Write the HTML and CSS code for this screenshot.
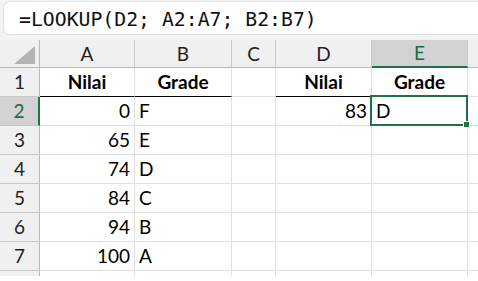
FILE: index.html
```html
<!DOCTYPE html>
<html>
<head>
<meta charset="utf-8">
<link rel="stylesheet" href="styles.css">
</head>
<body>
<div class="formula-area">
  <div class="fbox"><span class="ftext">=LOOKUP(D2; A2:A7; B2:B7)</span></div>
</div>
<div class="sheet">
  <div class="corner"><svg class="tri" width="22" height="18" viewBox="0 0 22 18"><polygon points="0,18 21,18 21,0" fill="#b4b4b4"/></svg></div>
  <div class="ch">A</div><div class="ch">B</div><div class="ch">C</div><div class="ch">D</div><div class="ch sel">E</div><div class="ch last"></div>

  <div class="rh">1</div>
  <div class="c b ctr under">Nilai</div><div class="c b ctr under">Grade</div><div class="c"></div><div class="c b ctr under">Nilai</div><div class="c b ctr under">Grade</div><div class="c last"></div>

  <div class="rh sel">2</div>
  <div class="c r">0</div><div class="c">F</div><div class="c"></div><div class="c r">83</div><div class="c active">D<span class="handle"></span></div><div class="c last"></div>

  <div class="rh">3</div>
  <div class="c r">65</div><div class="c">E</div><div class="c"></div><div class="c"></div><div class="c"></div><div class="c last"></div>

  <div class="rh">4</div>
  <div class="c r">74</div><div class="c">D</div><div class="c"></div><div class="c"></div><div class="c"></div><div class="c last"></div>

  <div class="rh">5</div>
  <div class="c r">84</div><div class="c">C</div><div class="c"></div><div class="c"></div><div class="c"></div><div class="c last"></div>

  <div class="rh">6</div>
  <div class="c r">94</div><div class="c">B</div><div class="c"></div><div class="c"></div><div class="c"></div><div class="c last"></div>

  <div class="rh">7</div>
  <div class="c r">100</div><div class="c">A</div><div class="c"></div><div class="c"></div><div class="c"></div><div class="c last"></div>

  <div class="rh stub"></div>
  <div class="c stub"></div><div class="c stub"></div><div class="c stub"></div><div class="c stub"></div><div class="c stub"></div><div class="c stub last"></div>
</div>
</body>
</html>
```
FILE: styles.css
```css
html, body {
  margin: 0;
  padding: 0;
  background: #ffffff;
}
body {
  width: 478px;
  height: 281px;
  overflow: hidden;
  font-family: Lato, "Open Sans", sans-serif;
  color: #000;
}
.formula-area {
  height: 40px;
  box-sizing: border-box;
  padding: 1px 0 5px 3px;
  background: #f3f3f3;
}
.fbox {
  height: 34px;
  box-sizing: border-box;
  background: #ffffff;
  border: 1px solid #e3e3e3;
  border-right: none;
  border-radius: 7px 0 0 7px;
  display: flex;
  align-items: center;
  padding-left: 15px;
}
.ftext {
  font-family: "DejaVu Sans Mono", monospace;
  font-size: 19.8px;
  letter-spacing: 0;
  white-space: pre;
  color: #111;
  position: relative;
  top: 1px;
}
.sheet {
  display: grid;
  grid-template-columns: 40px 95px 97px 44px 96px 96px 10px;
  grid-template-rows: 28px repeat(7, 29px) 5px;
  font-size: 19px;
}
.corner {
  background: #f0f0f0;
  border-right: 1px solid #b9b9b9;
  border-bottom: 1px solid #b9b9b9;
  display: flex;
  align-items: flex-end;
  justify-content: flex-end;
  padding: 0 3px 3px 0;
}
.ch {
  background: #f0f0f0;
  border-right: 1px solid #c8c8c8;
  border-bottom: 1px solid #b9b9b9;
  text-align: center;
  line-height: 27px;
  color: #222;
}
.ch.sel {
  background: #d2d2d2;
  color: #1e6b41;
  border-bottom: 2px solid #217346;
  line-height: 26px;
}
.ch.last {
  border-right: none;
}
.rh {
  background: #f0f0f0;
  border-right: 1px solid #b9b9b9;
  border-bottom: 1px solid #c8c8c8;
  text-align: center;
  line-height: 28px;
  color: #222;
}
.rh.sel {
  background: #d2d2d2;
  color: #1e6b41;
  border-right: 2px solid #217346;
}
.c {
  border-right: 1px solid #e1e1e1;
  border-bottom: 1px solid #e1e1e1;
  line-height: 28px;
  padding: 0 4px;
  white-space: nowrap;
}
.c.last {
  border-right: none;
  padding: 0;
}
.c.r {
  text-align: right;
}
.c.ctr {
  text-align: center;
}
.c.b {
  font-weight: bold;
}
.c.under {
  border-bottom: 1px solid #000;
}
.stub {
  border-bottom: none;
  line-height: 0;
}
.c.active {
  position: relative;
}
.c.active::after {
  content: "";
  position: absolute;
  top: -2px;
  left: -2px;
  right: -1px;
  bottom: -1px;
  border: 2px solid #217346;
}
.handle {
  position: absolute;
  right: -3px;
  bottom: -3px;
  width: 5px;
  height: 5px;
  background: #217346;
  border: 1px solid #fff;
  z-index: 2;
}
```
